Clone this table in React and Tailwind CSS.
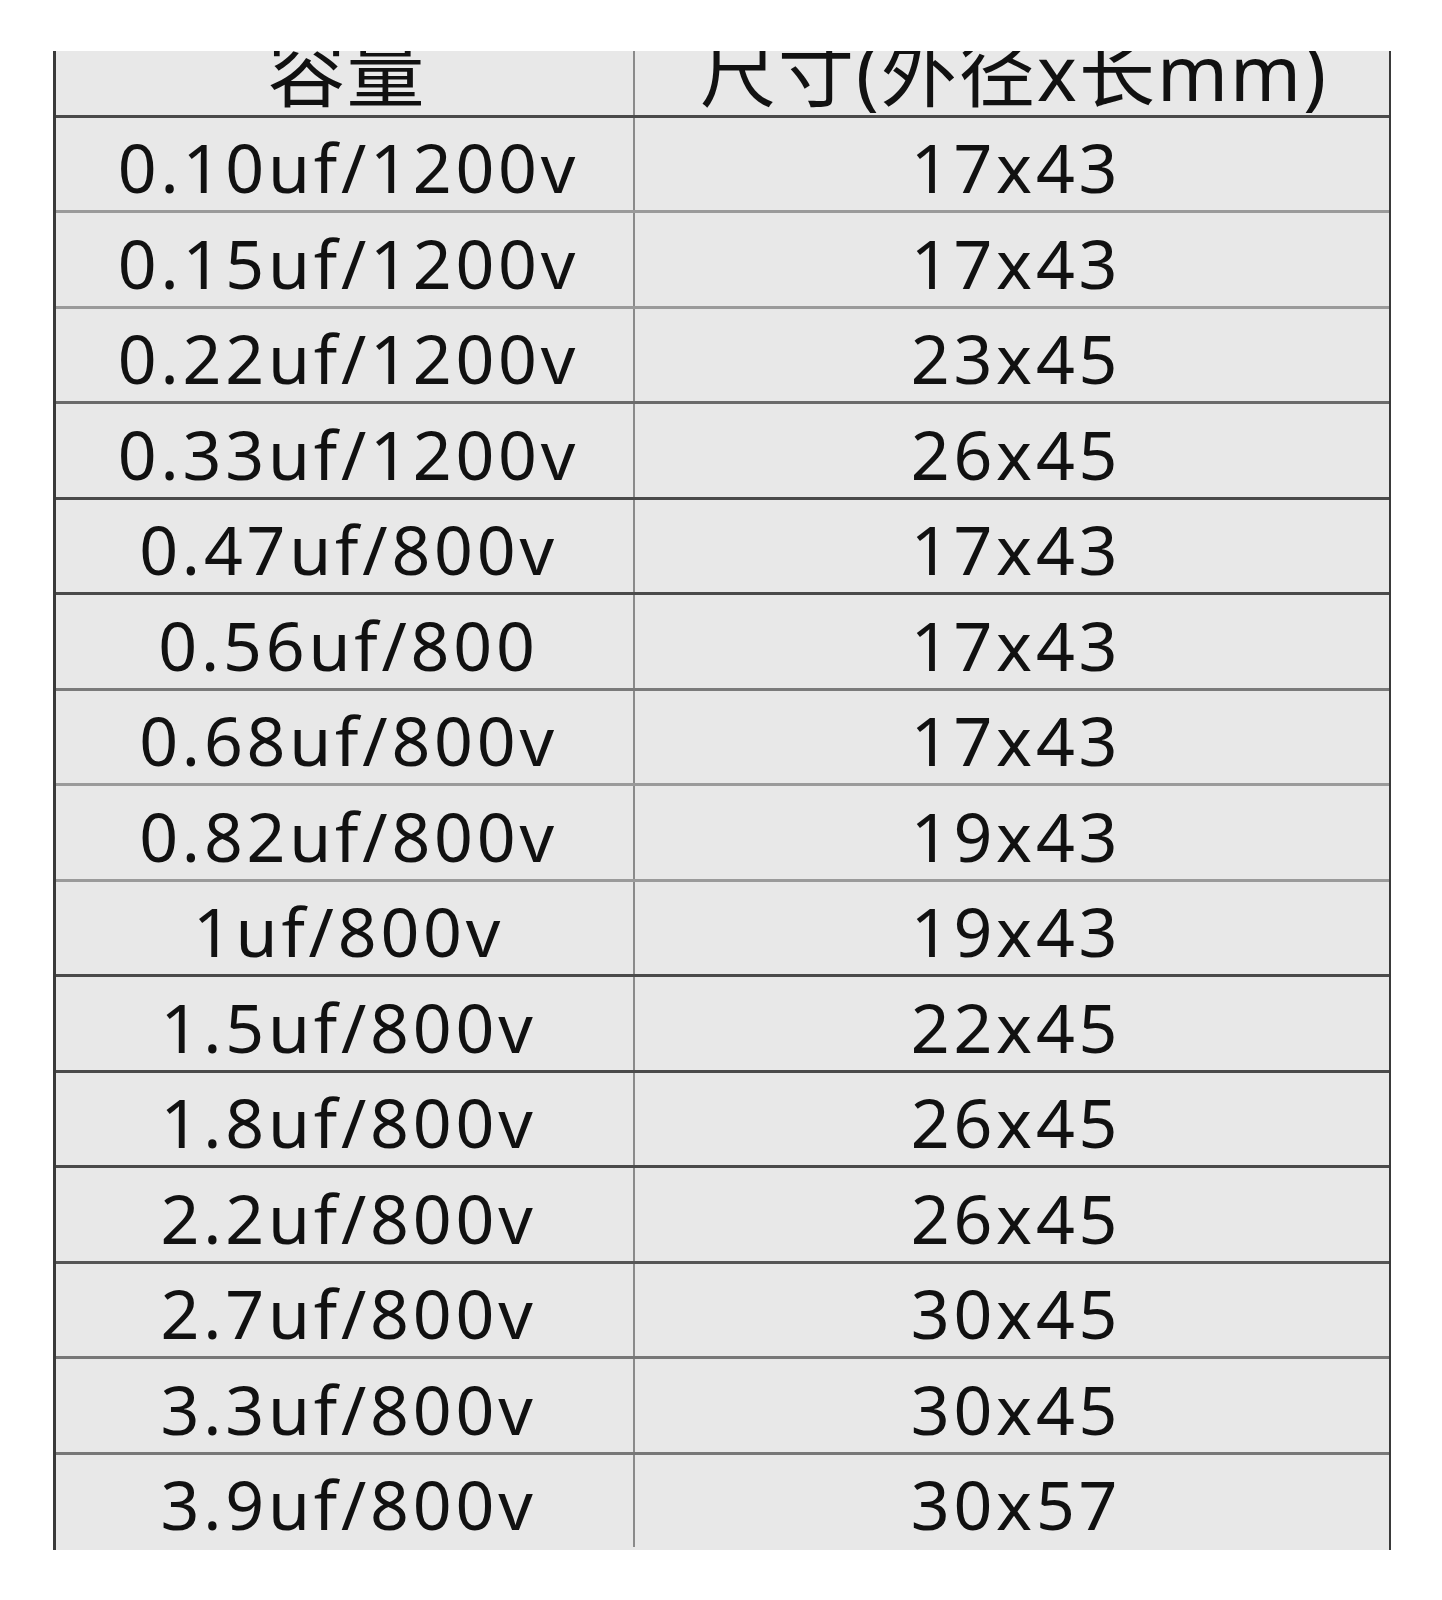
import React from "react";

const rows = [
  ["0.10uf/1200v", "17x43", "border-[#9a9a9a]"],
  ["0.15uf/1200v", "17x43", "border-[#9a9a9a]"],
  ["0.22uf/1200v", "23x45", "border-[#6a6a6a]"],
  ["0.33uf/1200v", "26x45", "border-[#4a4a4a]"],
  ["0.47uf/800v", "17x43", "border-[#4a4a4a]"],
  ["0.56uf/800", "17x43", "border-[#7a7a7a]"],
  ["0.68uf/800v", "17x43", "border-[#9a9a9a]"],
  ["0.82uf/800v", "19x43", "border-[#9a9a9a]"],
  ["1uf/800v", "19x43", "border-[#4a4a4a]"],
  ["1.5uf/800v", "22x45", "border-[#4a4a4a]"],
  ["1.8uf/800v", "26x45", "border-[#4a4a4a]"],
  ["2.2uf/800v", "26x45", "border-[#555555]"],
  ["2.7uf/800v", "30x45", "border-[#777777]"],
  ["3.3uf/800v", "30x45", "border-[#777777]"],
  ["3.9uf/800v", "30x57", "border-transparent"],
];

const font = { fontFamily: '"Noto Sans", "Noto Sans CJK SC", sans-serif' };

export default function App() {
  return (
    <div className="w-[1442px] h-[1600px] bg-white pt-[51px] pl-[53px]" style={font}>
      <div className="w-[1338px] border-l-[3px] border-r-[2px] border-[#3a3a3a] bg-[#e8e8e8] text-[#111]">
        <div className="flex h-[66.5px] border-b-[3px] border-[#4a4a4a] overflow-hidden">
          <div className="w-[579px] border-r-[2px] border-[#8a8a8a] flex items-end justify-center">
            <span className="text-[78px] leading-none mb-[5px] tracking-[1px] pl-[4px]">容量</span>
          </div>
          <div className="flex-1 flex items-end justify-center pl-[4px]">
            <span className="text-[76px] leading-none mb-[5px] tracking-[2px]">尺寸(外径x长mm)</span>
          </div>
        </div>
        {rows.map(([a, b, line], i) => (
          <div key={i} className={"flex h-[95.5px] border-b-[3px] " + line}>
            <div className="w-[579px] border-r-[2px] border-[#8a8a8a] flex items-center justify-center pt-[7px] pl-[8px]">
              <span className="text-[68px] leading-none tracking-[3.8px]">{a}</span>
            </div>
            <div className="flex-1 flex items-center justify-center pt-[7px] pl-[8px]">
              <span className="text-[68px] leading-none tracking-[3.8px]">{b}</span>
            </div>
          </div>
        ))}
      </div>
    </div>
  );
}
